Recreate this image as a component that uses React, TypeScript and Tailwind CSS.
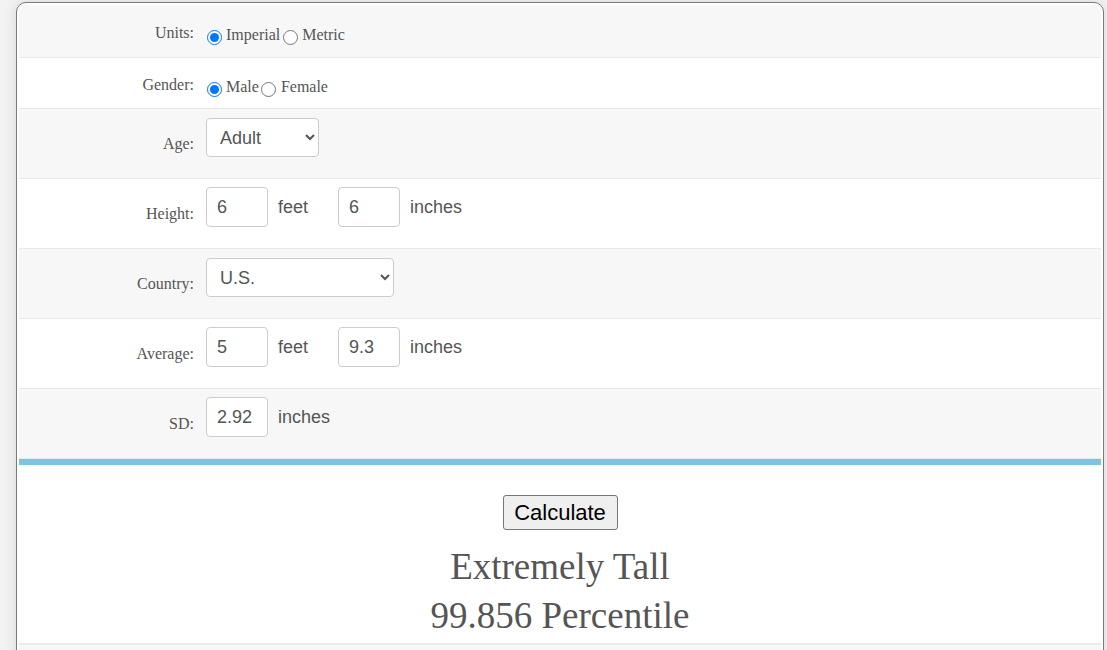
import React, { useState } from "react";

const serif = "font-['Liberation_Serif',serif]";
const sans = "font-['Liberation_Sans',Arial,sans-serif]";

const Row = ({
  label,
  gray,
  tall,
  first,
  children,
}: {
  label: string;
  gray?: boolean;
  tall?: boolean;
  first?: boolean;
  children: React.ReactNode;
}) => (
  <div
    className={`flex border-b border-[#e9e9e9] ${gray ? "bg-[#f7f7f7]" : "bg-white"} ${
      tall ? "h-[70px]" : first ? "h-[53px] pt-[18px]" : "h-[51px] pt-[17px]"
    }`}
  >
    <div
      className={`w-[175px] shrink-0 text-right text-[16px] leading-[20px] text-[#555] ${
        tall ? "pt-[25px]" : ""
      }`}
    >
      {label}:
    </div>
    <div className={`ml-[12px] ${tall ? "pt-[8px]" : ""}`}>{children}</div>
  </div>
);

const NumBox = ({ value }: { value: string }) => (
  <input
    type="text"
    defaultValue={value}
    className={`${sans} h-[40px] w-[62px] rounded-[4px] border border-[#ccc] bg-white px-[10px] text-[18px] text-[#555] outline-none`}
  />
);

const Unit = ({ text, wide }: { text: string; wide?: boolean }) => (
  <span className={`${sans} ml-[10px] text-[18px] text-[#555] ${wide ? "mr-[30px]" : ""}`}>{text}</span>
);

const radio = "h-[15px] w-[15px] align-[-5px]";

const App = () => {
  const [units, setUnits] = useState("imperial");
  const [gender, setGender] = useState("male");

  return (
    <div className={`${serif} min-h-[650px] bg-[#f3f3f3] pt-[2px]`}>
      <div className="ml-[16px] w-[1088px] overflow-hidden rounded-t-[10px] border border-[#7a7a7a] bg-white px-[2px] pt-[2px] shadow-[0_0_14px_rgba(0,0,0,0.12)]">
        <Row label="Units" gray first>
          <span className="text-[16px] leading-[20px] text-[#555]">
            <input
              type="radio"
              name="units"
              checked={units === "imperial"}
              onChange={() => setUnits("imperial")}
              className={`${radio} ml-[1px] mr-[4px]`}
            />
            Imperial
            <input
              type="radio"
              name="units"
              checked={units === "metric"}
              onChange={() => setUnits("metric")}
              className={`${radio} ml-[3px] mr-[4px]`}
            />
            Metric
          </span>
        </Row>

        <Row label="Gender">
          <span className="text-[16px] leading-[20px] text-[#555]">
            <input
              type="radio"
              name="gender"
              checked={gender === "male"}
              onChange={() => setGender("male")}
              className={`${radio} ml-[1px] mr-[4px]`}
            />
            Male
            <input
              type="radio"
              name="gender"
              checked={gender === "female"}
              onChange={() => setGender("female")}
              className={`${radio} ml-[2px] mr-[5px]`}
            />
            Female
          </span>
        </Row>

        <Row label="Age" gray tall>
          <select
            defaultValue="adult"
            className={`${sans} mt-[1px] h-[39px] w-[113px] rounded-[4px] border border-[#ccc] bg-white pl-[9px] text-[18px] text-[#555]`}
          >
            <option value="adult">Adult</option>
            <option value="child">Child</option>
          </select>
        </Row>

        <Row label="Height" tall>
          <div className="flex items-center">
            <NumBox value="6" />
            <Unit text="feet" wide />
            <NumBox value="6" />
            <Unit text="inches" />
          </div>
        </Row>

        <Row label="Country" gray tall>
          <select
            defaultValue="us"
            className={`${sans} mt-[1px] h-[39px] w-[188px] rounded-[4px] border border-[#ccc] bg-white pl-[9px] text-[18px] text-[#555]`}
          >
            <option value="us">U.S.</option>
            <option value="uk">U.K.</option>
          </select>
        </Row>

        <Row label="Average" tall>
          <div className="flex items-center">
            <NumBox value="5" />
            <Unit text="feet" wide />
            <NumBox value="9.3" />
            <Unit text="inches" />
          </div>
        </Row>

        <Row label="SD" gray tall>
          <div className="flex items-center">
            <NumBox value="2.92" />
            <Unit text="inches" />
          </div>
        </Row>

        <div className="h-[6px] bg-[#7dc3e3]" />

        {/* result */}
        <div className="flex flex-col items-center bg-white pt-[30px] pb-[3px]">
          <button
            className={`${sans} h-[35px] w-[115px] rounded-[3px] border border-[#767676] bg-[#efefef] text-[22px] text-black`}
          >
            Calculate
          </button>
          <div className="mt-[12px] text-[37px] leading-[49px] text-[#555]">Extremely Tall</div>
          <div className="text-[37px] leading-[49px] text-[#555]">99.856 Percentile</div>
        </div>
        <div className="h-[2px] bg-[#ebebeb]" />
        <div className="h-[20px] bg-[#f7f7f7]" />
      </div>
    </div>
  );
};

export default App;
